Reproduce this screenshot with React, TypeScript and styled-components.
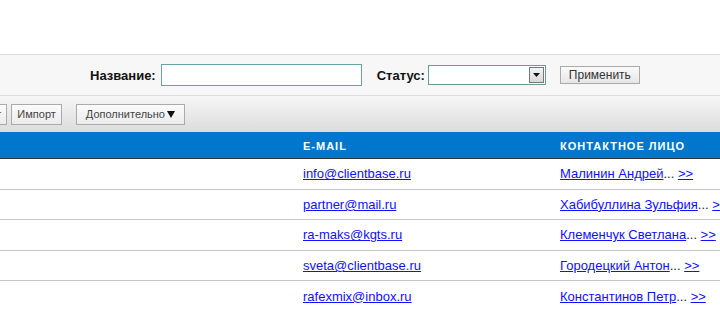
import React from 'react';
import styled, { createGlobalStyle } from 'styled-components';

const GlobalStyle = createGlobalStyle`
  body {
    margin: 0;
    overflow: hidden;
    background: #fff;
    font-family: "Liberation Sans", Arial, sans-serif;
  }
`;

const Page = styled.div`
  width: 720px;
  height: 310px;
  overflow: hidden;
`;

const TopSpace = styled.div`
  height: 54px;
`;

const FilterBar = styled.div`
  display: flex;
  align-items: center;
  height: 40px;
  padding-left: 90px;
  background: #f7f7f7;
  border-top: 1px solid #dedede;
  border-bottom: 1px solid #dedede;
`;

const FilterLabel = styled.label<{ $gap?: number }>`
  font-size: 13px;
  font-weight: bold;
  color: #111;
  margin-right: ${p => p.$gap ?? 5}px;
`;

const TextInput = styled.div`
  width: 197px;
  height: 18px;
  border: 1px solid #6aa3a3;
  padding: 1px;
  background: #fff;
  margin-right: 15px;
`;

const Select = styled.div`
  display: flex;
  justify-content: flex-end;
  width: 116px;
  height: 18px;
  border: 1px solid #6a9a9a;
  background: #fff;
  margin-right: 14px;
`;

const SelectArrow = styled.div`
  width: 15px;
  height: 16px;
  margin: 1px;
  background: linear-gradient(#f4f4f4, #d8d8d8);
  border: 1px solid #777;
  box-sizing: border-box;
  display: flex;
  align-items: center;
  justify-content: center;
`;

const ApplyButton = styled.div`
  height: 16px;
  padding: 0 8px;
  border: 1px solid #aaa;
  background: linear-gradient(#fafafa, #e6e6e6);
  font-size: 12px;
  line-height: 16px;
  color: #333;
`;

const Toolbar = styled.div`
  display: flex;
  align-items: center;
  height: 36px;
  background: linear-gradient(#f6f6f6, #dcdcdc);
`;

const ToolButton = styled.div<{ $offset?: number; $wide?: boolean }>`
  height: 21px;
  padding: 0 ${p => (p.$wide ? 9 : 5)}px;
  margin-left: ${p => p.$offset ?? 0}px;
  border: 1px solid #aaa;
  background: linear-gradient(#fbfbfb, #ececec);
  font-size: 11px;
  line-height: 21px;
  color: #444;
  box-sizing: border-box;
  display: flex;
  align-items: center;
  gap: 2px;
`;

const HeadRow = styled.div`
  display: grid;
  grid-template-columns: 303px 257px 1fr;
  height: 26px;
  align-items: center;
  background: #0077cc;
  border-bottom: 1px solid #333;
`;

const HeadCell = styled.div`
  font-size: 11px;
  font-weight: bold;
  letter-spacing: 1px;
  color: #fff;
  white-space: nowrap;
  padding-top: 2px;
`;

const Row = styled.div`
  display: grid;
  grid-template-columns: 303px 257px 1fr;
  height: 29.6px;
  align-items: center;
  border-bottom: 1px solid #c4c4c4;
`;

const Cell = styled.div`
  font-size: 13px;
  white-space: nowrap;
  color: #222;
`;

const Link = styled.a`
  color: #1010ff;
  text-decoration: underline;
`;

const rows = [
  { email: 'info@clientbase.ru', contact: 'Малинин Андрей' },
  { email: 'partner@mail.ru', contact: 'Хабибуллина Зульфия' },
  { email: 'ra-maks@kgts.ru', contact: 'Клеменчук Светлана' },
  { email: 'sveta@clientbase.ru', contact: 'Городецкий Антон' },
  { email: 'rafexmix@inbox.ru', contact: 'Константинов Петр' },
];

const App: React.FC = () => {
  return (
    <Page>
      <GlobalStyle />
      <TopSpace />
      <FilterBar>
        <FilterLabel>Название:</FilterLabel>
        <TextInput />
        <FilterLabel $gap={3}>Статус:</FilterLabel>
        <Select>
          <SelectArrow>
            <svg width="7" height="4" viewBox="0 0 7 4">
              <path d="M0 0h7L3.5 4z" fill="#111" />
            </svg>
          </SelectArrow>
        </Select>
        <ApplyButton>Применить</ApplyButton>
      </FilterBar>
      <Toolbar>
        <ToolButton $offset={-46}>Экспорт</ToolButton>
        <ToolButton $offset={4}>Импорт</ToolButton>
        <ToolButton $offset={14} $wide>
          Дополнительно
          <svg width="8" height="8" viewBox="0 0 8 8">
            <path d="M0 1h8L4 8z" fill="#111" />
          </svg>
        </ToolButton>
      </Toolbar>
      <HeadRow>
        <HeadCell />
        <HeadCell>E-MAIL</HeadCell>
        <HeadCell>КОНТАКТНОЕ ЛИЦО</HeadCell>
      </HeadRow>
      {rows.map(r => (
        <Row key={r.email}>
          <Cell />
          <Cell>
            <Link href="#">{r.email}</Link>
          </Cell>
          <Cell>
            <Link href="#">{r.contact}</Link>... <Link href="#">&gt;&gt;</Link>
          </Cell>
        </Row>
      ))}
    </Page>
  );
};

export default App;
